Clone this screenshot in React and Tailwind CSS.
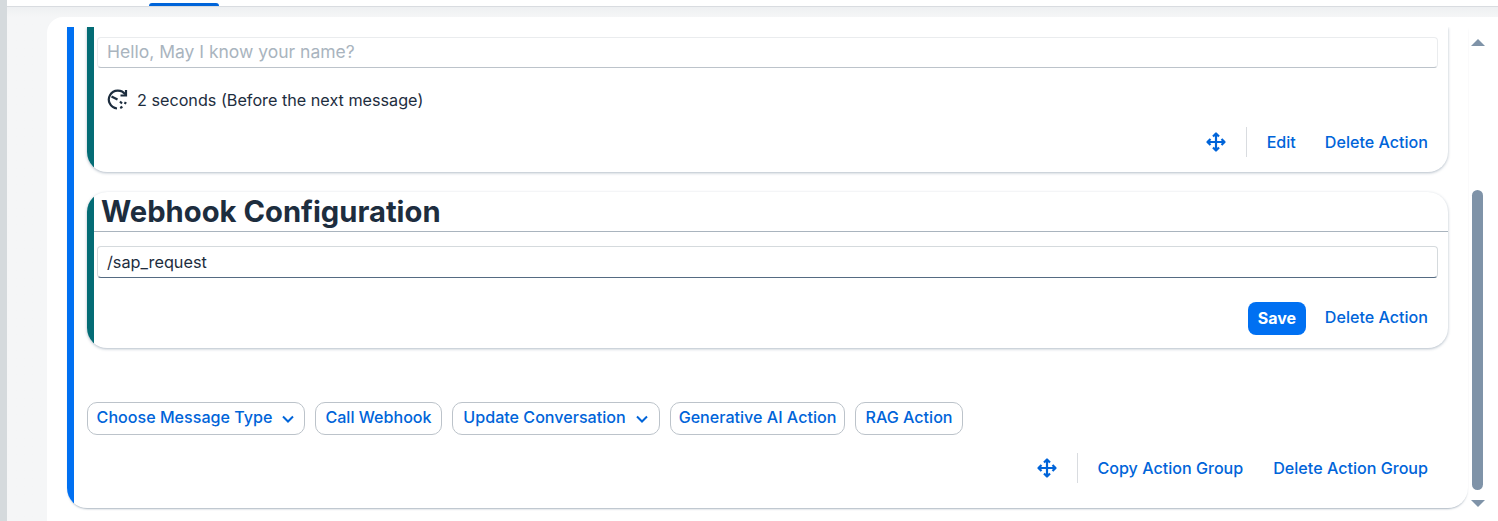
const font = { fontFamily: 'Inter, sans-serif' };

function MoveIcon() {
  return (
    <svg width="20" height="20" viewBox="0 0 20 20" fill="none" stroke="#0064d9" strokeWidth="2.2" className="shrink-0">
      <path d="M10 2v16M2 10h16" />
      <path d="M7 4.5 10 1.5l3 3M7 15.5l3 3 3-3M4.5 7l-3 3 3 3M15.5 7l3 3-3 3" strokeLinejoin="round" />
    </svg>
  );
}

function TimerIcon() {
  return (
    <svg width="21" height="21" viewBox="0 0 21 21" fill="none" stroke="#1d2d3e" strokeWidth="2.2" className="shrink-0 mb-[2px]">
      <path d="M18.3 5.5A9 9 0 1 0 10 19.5" />
      <path d="M13.5 6.5h5.5V1" />
      <path d="M4.5 7.5 10.5 10.5" />
      <path d="M13 12.5l2 2" />
      <path d="M13.2 19l2.2-1.2M17.8 15l1-2" />
    </svg>
  );
}

function LinkButton({ children, lift }) {
  return (
    <button className={`text-[#0064d9] text-[16.1px] font-medium leading-none whitespace-nowrap ${lift ? 'pb-[2px]' : ''}`}>
      {children}
    </button>
  );
}

function Chip({ label, caret, width }) {
  return (
    <button className={`h-[33px] pb-[2px] rounded-[10px] border border-[#bcc3ca] flex items-center justify-center gap-[9px] text-[#0064d9] text-[16.1px] font-medium whitespace-nowrap ${width}`}>
      {label}
      {caret && (
        <svg width="14" height="14" viewBox="0 0 14 14" fill="none" stroke="#0064d9" strokeWidth="2" className="mt-[2px]">
          <path d="M2 4.5 7 9.5l5-5" />
        </svg>
      )}
    </button>
  );
}

export default function App() {
  return (
    <div className="flex h-[521px] overflow-hidden bg-[#f5f6f7]" style={font}>
      <div className="w-[7px] bg-[#d5dadd]" />
      <div className="flex-1 flex flex-col min-w-0">
        <div className="h-[7px] shrink-0 bg-white border-b border-[#d9dce0] pl-[142px] pt-[3px]">
          <div className="w-[70px] h-[3px] bg-[#0064d9] rounded-t-sm" />
        </div>
        <div className="flex-1 pl-[40px] pt-[10px] bg-gradient-to-b from-[#eef0f2] to-[#f5f6f7] to-[10px]">
          <div className="h-full bg-white rounded-tl-2xl pl-[20px] pt-[10px] flex">
            <div className="w-[1401px] h-[481px] shrink-0 flex overflow-hidden rounded-b-[20px] shadow-[0_2px_2px_-1px_rgba(85,107,130,0.5)]">
              <div className="w-[7px] shrink-0 bg-[#0070f2]" />
              <div className="flex-1 min-w-0 pl-[13px] flex flex-col">
                <div className="w-[1361px] h-[145px] shrink-0 flex overflow-hidden rounded-b-[20px] shadow-[0_1px_3px_rgba(85,107,130,0.45)]">
                  <div className="w-[7px] shrink-0 bg-[#046c75]" />
                  <div className="flex-1 min-w-0 pl-[3px] pr-[10px] pt-[10px] flex flex-col">
                    <div className="h-[31px] rounded-[4px] border border-[#eaecee] border-b-[#bcc3ca] pl-[9px] flex items-center text-[17.5px] text-[#a9b4be]">
                      Hello, May I know your name?
                    </div>
                    <div className="flex items-center ml-[10px] mt-[20px] gap-[9px] text-[16.2px] text-[#1d2d3e]">
                      <TimerIcon />
                      <span>2 seconds (Before the next message)</span>
                    </div>
                    <div className="flex items-center justify-end mt-[15px] pr-[10px]">
                      <MoveIcon />
                      <div className="w-px h-[30px] bg-[#d9dce0] ml-[20px] mr-[20px]" />
                      <LinkButton>Edit</LinkButton>
                      <div className="w-[29px]" />
                      <LinkButton>Delete Action</LinkButton>
                    </div>
                  </div>
                </div>
                <div className="w-[1361px] h-[156px] shrink-0 mt-[20px] flex overflow-hidden rounded-[20px] shadow-[0_1px_3px_rgba(85,107,130,0.45)]">
                  <div className="w-[7px] shrink-0 bg-[#046c75]" />
                  <div className="flex-1 min-w-0 flex flex-col">
                    <div className="h-[40px] shrink-0 border-b border-[#a9b4be] pl-[7px] flex items-center text-[29.2px] font-bold text-[#1d2d3e]">
                      Webhook Configuration
                    </div>
                    <div className="h-[32px] mt-[14px] ml-[3px] mr-[10px] rounded-[4px] border border-[#d5dadd] border-b-[#556b82] pl-[9px] flex items-center text-[16.3px] text-[#1d2d3e]">
                      /sap_request
                    </div>
                    <div className="flex items-center justify-end mt-[24px] pr-[20px]">
                      <button className="w-[58px] h-[33px] pb-[2px] rounded-lg bg-[#0070f2] text-white text-[16px] font-bold">Save</button>
                      <div className="w-[19px]" />
                      <LinkButton lift>Delete Action</LinkButton>
                    </div>
                  </div>
                </div>
                <div className="flex gap-[10px] mt-[54px]">
                  <Chip label="Choose Message Type" caret width="w-[218px]" />
                  <Chip label="Call Webhook" width="w-[127px]" />
                  <Chip label="Update Conversation" caret width="w-[208px]" />
                  <Chip label="Generative AI Action" width="w-[175px]" />
                  <Chip label="RAG Action" width="w-[108px]" />
                </div>
                <div className="flex items-center justify-end mt-[18px] pr-[40px]">
                  <MoveIcon />
                  <div className="w-px h-[30px] bg-[#d9dce0] ml-[20px] mr-[19px]" />
                  <LinkButton>Copy Action Group</LinkButton>
                  <div className="w-[30px]" />
                  <LinkButton>Delete Action Group</LinkButton>
                </div>
              </div>
            </div>
            <div className="w-[13px] ml-[3px] flex flex-col items-center pt-[12px]">
              <div className="w-0 h-0 border-x-[7px] border-x-transparent border-b-[7px] border-b-[#7f93a8]" />
              <div className="w-[11px] h-[300px] mt-[144px] rounded-full bg-[#7f93a8]" />
              <div className="w-0 h-0 mt-[10px] border-x-[7px] border-x-transparent border-t-[7px] border-t-[#7f93a8]" />
            </div>
          </div>
        </div>
      </div>
    </div>
  );
}
